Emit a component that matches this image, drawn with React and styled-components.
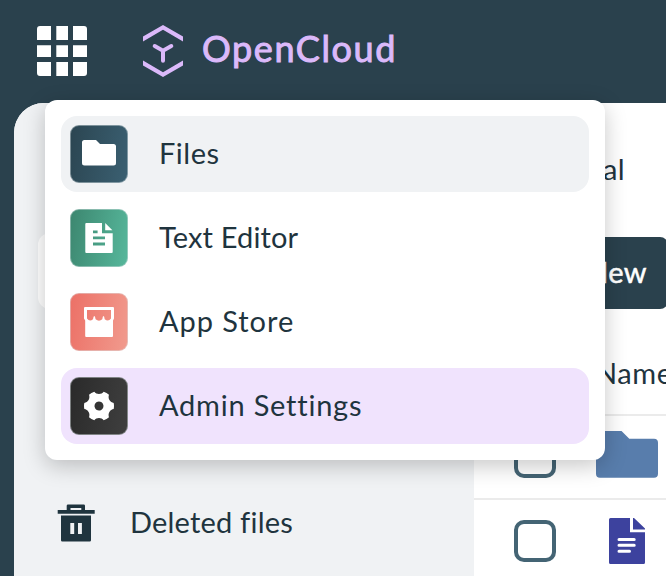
import React from "react";
import styled, { createGlobalStyle } from "styled-components";
import { RiSettings4Fill } from "react-icons/ri";

const GlobalStyle = createGlobalStyle`
  * { box-sizing: border-box; }
  html, body { margin: 0; overflow: hidden; background: #2a414d; }
  body { font-family: Lato, sans-serif; font-size: 29px; color: #1f343e; }
  svg { display: block; flex: none; }
`;

const Shell = styled.div`
  position: relative;
  width: 666px;
  height: 576px;
  overflow: hidden;
  display: flex;
  flex-direction: column;
  background: #2a414d;
`;

const TopBar = styled.header`
  flex: none;
  height: 103px;
  padding: 0 0 1px 37px;
  display: flex;
  align-items: center;
`;

const Brand = styled.div`
  display: flex;
  align-items: center;
  gap: 18px;
  margin-left: 55px;
  color: #dbb9fa;
`;

const BrandName = styled.span`
  font-size: 36px;
  font-weight: 400;
  line-height: 44px;
  letter-spacing: 1.6px;
  padding-bottom: 6px;
  -webkit-text-stroke: 1px currentColor;
`;

const Workspace = styled.div`
  flex: 1;
  margin-left: 14px;
  display: grid;
  grid-template-columns: 460px 1fr;
  border-top-left-radius: 30px;
  overflow: hidden;
  background: #fff;
`;

const Sidebar = styled.nav`
  background: #f0f2f4;
  padding: 130px 24px 0;
  display: flex;
  flex-direction: column;
  gap: 176px;
`;

const NavItem = styled.a`
  flex: none;
  height: 76px;
  padding-left: 19px;
  display: flex;
  align-items: center;
  gap: 35px;
  border-radius: 12px;
  background: ${(p) => (p.$active ? "#fff" : "transparent")};
`;

const Label = styled.span`
  white-space: nowrap;
  line-height: 36px;
  padding-bottom: 2px;
  -webkit-text-stroke: ${(p) => p.$stroke || 0}px currentColor;
  letter-spacing: ${(p) => p.$spacing || 0}px;
`;

const Main = styled.main`
  min-width: 0;
  display: flex;
  flex-direction: column;
`;

const Crumbs = styled.div`
  height: 134px;
  padding-right: 41px;
  display: flex;
  align-items: center;
  justify-content: flex-end;
`;

const NewButton = styled.button`
  align-self: flex-end;
  margin-right: -2px;
  width: 140px;
  height: 72px;
  padding: 0 21px 0 0;
  display: flex;
  align-items: center;
  justify-content: flex-end;
  border: 0;
  border-radius: 8px;
  background: #2a414d;
  color: #fff;
  font: inherit;
`;

const TableHead = styled.div`
  height: 105px;
  padding: 24px 0 0 121px;
  display: flex;
  align-items: center;
`;

const FileRow = styled.div`
  flex: none;
  height: 84px;
  padding-left: 40px;
  display: grid;
  grid-template-columns: 42px 62px;
  column-gap: 40px;
  align-items: center;
  justify-items: center;
  border-top: 2px solid #ebebeb;
`;

const Checkbox = styled.span`
  width: 42px;
  height: 42px;
  border: 4px solid #446474;
  border-radius: 10px;
`;

const AppMenu = styled.div`
  position: absolute;
  left: 45px;
  top: 100px;
  width: 560px;
  height: 360px;
  padding: 16px;
  display: flex;
  flex-direction: column;
  gap: 8px;
  border-radius: 12px;
  background: #fff;
  box-shadow: 0 6px 22px rgba(0, 0, 0, 0.22);
`;

const MenuItem = styled.div`
  height: 76px;
  padding-left: 9px;
  display: flex;
  align-items: center;
  gap: 31px;
  border-radius: 16px;
  background: ${(p) => p.$bg || "transparent"};
`;

const Tile = styled.span`
  width: 58px;
  height: 58px;
  display: grid;
  place-items: center;
  border-radius: 9px;
  border: 1px solid rgba(220, 228, 230, 0.45);
  background: linear-gradient(100deg, ${(p) => p.$from}, ${(p) => p.$to}) border-box;
  color: #fff;
`;

const GridIcon = () => (
  <svg width="50" height="50" viewBox="0 0 50 50" fill="#fff">
    <path d="M3 0h11v14H0V3a3 3 0 0 1 3-3ZM19.3 0H31v14H19.3ZM36 0h11a3 3 0 0 1 3 3v11H36ZM0 19.3h14V31H0ZM19.3 19.3H31V31H19.3ZM36 19.3h14V31H36ZM0 36h14v14H3a3 3 0 0 1-3-3ZM19.3 36H31v14H19.3ZM36 36h14v11a3 3 0 0 1-3 3H36Z" />
  </svg>
);

const LogoIcon = () => (
  <svg width="42" height="52" viewBox="0 0 42 52" fill="currentColor">
    <path d="M1 11.6 21 0l20 11.6v4.8L21 4.8 1 16.4ZM1 35.6l20 11.6 20-11.6v4.8L21 52 1 40.4Z" />
    <path d="m12.7 21 8.3 4.8 8.3-4.8M21 25.8v10" fill="none" stroke="currentColor" strokeWidth="4" strokeLinecap="round" />
  </svg>
);

const FolderIcon = () => (
  <svg width="56" height="56" viewBox="1 1 56 56" fill="currentColor">
    <path d="M15 15h11l4 4h13.500a2.500 2.500 0 0 1 2.500 2.500V38a2.500 2.500 0 0 1-2.500 2.500h-29A2.500 2.500 0 0 1 12 38V17.700A2.700 2.700 0 0 1 15 15Z" />
  </svg>
);

const DocumentIcon = () => (
  <svg width="56" height="56" viewBox="1 1 56 56" fill="currentColor" fillRule="evenodd">
    <path d="M16.300 14H32v10.300h10.700V43a1 1 0 0 1-1 1H16.300a1 1 0 0 1-1-1V15a1 1 0 0 1 1-1ZM23 21.500v2.800h4.600v-2.800ZM23 27.600v2.700h12v-2.700ZM23 33.600v2.800h12v-2.800ZM35.200 14l7.200 7.200h-7.200Z" />
  </svg>
);

const StoreIcon = () => (
  <svg width="56" height="56" viewBox="1 1 56 56" fill="currentColor" fillRule="evenodd">
    <path d="M15 14h28a1 1 0 0 1 1 1v10.500l-1 2V43a1 1 0 0 1-1 1H16.200a1 1 0 0 1-1-1V27.500l-1.200-2V15a1 1 0 0 1 1-1ZM17 17v8.500Q19.500 29 23 26.300q.5-3.300 1.300-3.300t1.300 3.300Q29 29 32.300 26.300q.4-3.300 1.200-3.300t1.200 3.300Q38.500 29 41 25.500V17Z" />
  </svg>
);

const TrashIcon = () => (
  <svg width="38" height="38" viewBox="57 504 38 38" fill="#1f343e" fillRule="evenodd">
    <path d="M57.700 510h9v-4.200q0-1.300 1.300-1.300h15.700q1.300 0 1.300 1.300V510h9.700v3.700h-37ZM70.500 508v2h10.800v-2ZM61 515.500h30v24.700q0 1.300-1.300 1.300H62.300q-1.300 0-1.300-1.300ZM70.300 523v11h3.900v-11ZM78 523v11h3.900v-11Z" />
  </svg>
);

const BigFolder = () => (
  <svg width="62" height="52" viewBox="0 0 62 52" fill="#587dac">
    <path d="M4 0h21.500l7.800 7.700H58a4 4 0 0 1 4 4V42.700a4 4 0 0 1-4 4H4a4 4 0 0 1-4-4V4a4 4 0 0 1 4-4Z" />
  </svg>
);

const BigDocument = () => (
  <svg width="36" height="46" viewBox="0 0 36 46" fill="#3d429e">
    <path d="M1.500 0H21v14.300h15v30.200a1.500 1.500 0 0 1-1.500 1.500h-33A1.500 1.500 0 0 1 0 44.500v-43A1.500 1.500 0 0 1 1.500 0ZM24 0h1l11 10.600v1H24Z" />
    <path d="M10 21.500h15.200M10 27.300h15.200M10 33.200h10.500" stroke="#fff" strokeWidth="3" strokeLinecap="round" />
  </svg>
);

const apps = [
  { name: "Files", icon: <FolderIcon />, from: "#2b4551", to: "#3b6072", bg: "#f0f2f4", spacing: 0.5 },
  { name: "Text Editor", icon: <DocumentIcon />, from: "#3c866f", to: "#57b89c", spacing: 0.15 },
  { name: "App Store", icon: <StoreIcon />, from: "#ec7066", to: "#f19b8e", spacing: 0.95 },
  { name: "Admin Settings", icon: <RiSettings4Fill size={36} />, from: "#2a2a2a", to: "#3f3f3f", bg: "#f0e3fd", spacing: 0.78 },
];

export default function App() {
  return (
    <>
      <GlobalStyle />
      <Shell>
        <TopBar>
          <GridIcon />
          <Brand>
            <LogoIcon />
            <BrandName>OpenCloud</BrandName>
          </Brand>
        </TopBar>
        <Workspace>
          <Sidebar>
            <NavItem $active />
            <NavItem>
              <TrashIcon />
              <Label $spacing={0.2}>Deleted files</Label>
            </NavItem>
          </Sidebar>
          <Main>
            <Crumbs>
              <Label $spacing={0.4}>Personal</Label>
            </Crumbs>
            <NewButton>
              <Label $spacing={0.4} $stroke={0.5}>New</Label>
            </NewButton>
            <TableHead>
              <Label $spacing={0.6}>Name</Label>
            </TableHead>
            <FileRow>
              <Checkbox />
              <BigFolder />
            </FileRow>
            <FileRow>
              <Checkbox />
              <BigDocument />
            </FileRow>
          </Main>
        </Workspace>
        <AppMenu>
          {apps.map((app) => (
            <MenuItem key={app.name} $bg={app.bg}>
              <Tile $from={app.from} $to={app.to}>{app.icon}</Tile>
              <Label $spacing={app.spacing}>{app.name}</Label>
            </MenuItem>
          ))}
        </AppMenu>
      </Shell>
    </>
  );
}
